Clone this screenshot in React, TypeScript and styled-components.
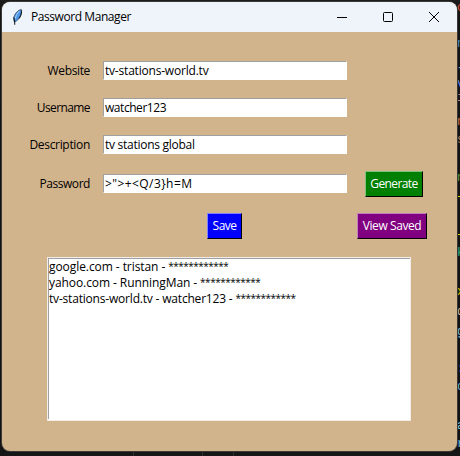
import React from "react";
import styled, { createGlobalStyle } from "styled-components";

const Global = createGlobalStyle`
  * { box-sizing: border-box; }
  html, body { margin: 0; background: #161616; overflow: hidden; }
`;

const Desktop = styled.div`
  position: relative;
  width: 460px;
  height: 456px;
  padding: 2px 0 0 2px;
  background: linear-gradient(#1c1c1c, #141414 10px, #111 440px, #171717);
  overflow: hidden;
  font: 12px/16px "Open Sans", "Noto Sans", sans-serif;
  color: #000;
`;

const Glyph = styled.span<{ $y: number; $color: string }>`
  position: absolute;
  left: 457px;
  top: ${(p) => p.$y - 8}px;
  font: 12px/16px "Liberation Mono", monospace;
  color: ${(p) => p.$color};
  white-space: pre;
`;

const Guide = styled.i<{ $x: number }>`
  position: absolute;
  left: ${(p) => p.$x}px;
  bottom: 0;
  width: 1px;
  height: 5px;
  background: #303030;
`;

const Window = styled.div`
  position: relative;
  width: 455px;
  height: 449px;
  border-radius: 8px;
  overflow: hidden;
  background: #d2b48c;
  box-shadow: 0 0 0 1px #3b3938;
`;

const TitleBar = styled.header`
  display: flex;
  align-items: center;
  height: 30px;
  background: #eff4fb;
`;

const AppIcon = styled.svg`
  margin: 0 7px 0 8px;
  flex: none;
`;

const Controls = styled.div`
  display: flex;
  margin-left: auto;
`;

const Control = styled.button`
  display: flex;
  align-items: center;
  justify-content: center;
  width: 46px;
  height: 30px;
  padding: 0;
  border: 0;
  background: none;
  svg { display: block; }
`;

const Text = styled.span<{ $track?: number }>`
  display: inline-block;
  white-space: pre;
  letter-spacing: ${(p) => p.$track ?? 0}px;
`;

const Mask = styled.span`
  display: inline-block;
  height: 16px;
  vertical-align: top;
  font-size: 10px;
  line-height: 15px;
  letter-spacing: -0.5px;
`;

const Form = styled.div`
  display: grid;
  grid-template-columns: 88px 257px 58px;
  grid-template-rows: 37px 37px 37px 41px;
  padding-top: 20px;
  align-items: center;
`;

const Label = styled.label`
  grid-column: 1;
  text-align: right;
  height: 16px;
`;

const Entry = styled.div`
  grid-column: 2;
  width: 244px;
  height: 19px;
  margin-left: 13px;
  padding: 1px 0 0 1px;
  border: 1px solid #fff;
  border-top-color: #a0a0a0;
  border-left-color: #a0a0a0;
  background: #fff;
`;

const Button = styled.button<{ $fill: string; $light: string; $w: number }>`
  width: ${(p) => p.$w}px;
  height: 26px;
  padding: 0;
  display: flex;
  align-items: center;
  justify-content: center;
  border: 1px solid #000;
  border-top-color: ${(p) => p.$light};
  border-left-color: ${(p) => p.$light};
  background: ${(p) => p.$fill};
  color: #fff;
  font: inherit;
`;

const GenerateCell = styled.div`
  grid-column: 3;
  align-self: end;
  margin: 0 0 7px 18px;
`;

const Actions = styled.div`
  display: flex;
  gap: 115px;
  padding: 9px 0 0 205px;
`;

const ListBox = styled.div`
  width: 364px;
  height: 164px;
  margin: 18px 0 0 45px;
  border: 1px solid #f0eeeb;
  background: #fff;
`;

const ListInner = styled.div`
  height: 161px;
  border-top: 1px solid #a0a0a0;
  border-left: 1px solid #a0a0a0;
`;

const Row = styled.div`
  height: 16px;
`;

const fields = [
  { label: "Website", lt: -0.35, value: "tv-stations-world.tv", vt: -0.2 },
  { label: "Username", lt: -0.6, value: "watcher123", vt: -0.45 },
  { label: "Description", lt: -0.32, value: "tv stations global", vt: -0.27 },
  { label: "Password", lt: -0.45, value: ">\">+<Q/3}h=M", vt: 0.42 },
];

const entries = [
  { text: "google.com - tristan - ", track: -0.07 },
  { text: "yahoo.com - RunningMan - ", track: -0.08 },
  { text: "tv-stations-world.tv - watcher123 - ", track: -0.19 },
];

const glyphs: [string, number, string][] = [
  ["o", 8, "#e4573d"], ["n", 44, "#4b8fc8"], ["-", 68, "#7fb8e8"], ["v", 84, "#6a8af0"],
  ["i", 98, "#d08070"], ["n", 122, "#d07040"], ["s", 140, "#d08860"], ["n", 178, "#5e9a3a"],
  ["+", 198, "#e8d400"], ["+", 236, "#e8d400"], ["k", 253, "#2fba88"], ["x", 292, "#e8d400"],
  ["d", 312, "#c8b8a0"], ["g", 332, "#7ac0e0"], [":", 369, "#a0a0ff"], ["o", 387, "#6abae0"],
  ["a", 426, "#7ac8e8"], ["r", 444, "#6abae0"],
];

export default function App() {
  return (
    <Desktop>
      <Global />
      {glyphs.map(([ch, y, color]) => (
        <Glyph key={y} $y={y} $color={color}>{ch}</Glyph>
      ))}
      <Guide $x={133} />
      <Guide $x={202} />
      <Guide $x={233} />
      <Window>
        <TitleBar>
          <AppIcon width="14" height="18" viewBox="0 0 14 18">
            <path d="M4 13.5 3.6 9.5 5.7 5.2 9 2.2 11.3 1.5 11.6 4.5 10 9.2 7.6 12 5 14Z" fill="#4a94ea" stroke="#3a4658" strokeWidth=".8" />
            <path d="M9.4 3 6.5 7 5 11" fill="none" stroke="#a9d0f8" strokeWidth="1" />
            <path d="M11.6 2.5 11 7 9 10.5M4 9.5 4.6 13 4.8 16.8" fill="none" stroke="#101820" strokeWidth="1" />
          </AppIcon>
          <Text $track={-0.43}>Password Manager</Text>
          <Controls>
            <Control aria-label="Minimize">
              <svg width="12" height="12"><path d="M1 6.5h10" stroke="#000" /></svg>
            </Control>
            <Control aria-label="Maximize">
              <svg width="12" height="12"><rect x="1.5" y="1.5" width="9" height="9" rx="1" fill="none" stroke="#000" /></svg>
            </Control>
            <Control aria-label="Close">
              <svg width="12" height="12"><path d="m1 1 10 10M11 1 1 11" stroke="#000" /></svg>
            </Control>
          </Controls>
        </TitleBar>
        <Form>
          {fields.map((f) => (
            <React.Fragment key={f.label}>
              <Label><Text $track={f.lt}>{f.label}</Text></Label>
              <Entry><Text $track={f.vt}>{f.value}</Text></Entry>
            </React.Fragment>
          ))}
          <GenerateCell>
            <Button $fill="#008000" $light="#7fbf7f" $w={58}><Text $track={-0.6}>Generate</Text></Button>
          </GenerateCell>
        </Form>
        <Actions>
          <Button $fill="#0000ff" $light="#7f7fff" $w={35}><Text $track={-0.55}>Save</Text></Button>
          <Button $fill="#800080" $light="#bf7fbf" $w={70}><Text $track={-0.4}>View Saved</Text></Button>
        </Actions>
        <ListBox>
          <ListInner>
            {entries.map((e) => (
              <Row key={e.text}>
                <Text $track={e.track}>{e.text}</Text>
                <Mask>************</Mask>
              </Row>
            ))}
          </ListInner>
        </ListBox>
      </Window>
    </Desktop>
  );
}
